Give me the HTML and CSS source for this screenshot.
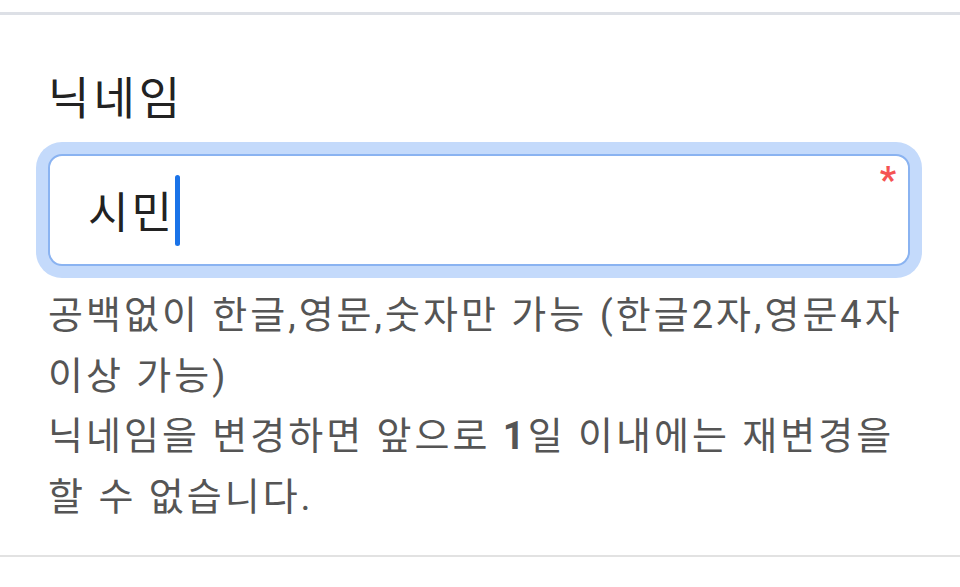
FILE: index.html
```html
<!DOCTYPE html>
<html lang="ko">
<head>
  <meta charset="UTF-8" />
  <meta name="viewport" content="width=device-width, initial-scale=1.0"/>
  <title>닉네임</title>
  <link rel="stylesheet" href="styles.css">
</head>
<body>
  <div class="topbar"></div>

  <section class="field">
    <label class="field-label" for="nick">닉네임</label>

    <div class="input-box" id="nick">
      <span class="input-value">시민</span><span class="caret"></span>
      <span class="required">*</span>
    </div>

    <p class="help">공백없이 한글,영문,숫자만 가능 (한글2자,영문4자 이상 가능)</p>
    <p class="help">닉네임을 변경하면 앞으로 <b>1</b>일 이내에는 재변경을 할 수 없습니다.</p>
  </section>
</body>
</html>
```

FILE: styles.css
```css
* {
  margin: 0;
  padding: 0;
  box-sizing: border-box;
}

body, html {
  height: 100%;
  background: #ffffff;
  font-family: Roboto, "Noto Sans CJK KR", sans-serif;
  overflow: hidden;
}

.topbar {
  height: 12px;
  border-bottom: 3px solid #dde0e6;
  box-sizing: content-box;
}

.field {
  padding: 55px 50px 28px 48px;
  border-bottom: 2px solid #e2e2e2;
}

.field-label {
  display: block;
  font-size: 45px;
  line-height: 60px;
  letter-spacing: 4px;
  color: #222222;
}

.input-box {
  position: relative;
  display: flex;
  align-items: center;
  height: 112px;
  margin-top: 24px;
  padding-left: 38px;
  border: 2px solid #8ab3f1;
  border-radius: 14px;
  box-shadow: 0 0 0 12px #c4dafb;
  background: #ffffff;
}

.input-value {
  font-size: 44px;
  letter-spacing: 3px;
  color: #222222;
}

.caret {
  width: 5px;
  height: 71px;
  border-radius: 3px;
  background: #1a73e8;
}

.required {
  position: absolute;
  top: 4px;
  right: 12px;
  font-size: 36px;
  font-weight: bold;
  line-height: 40px;
  color: #f55353;
}

.help {
  font-size: 38px;
  line-height: 60.5px;
  letter-spacing: 3px;
  color: #555555;
  word-break: keep-all;
}

.help:first-of-type {
  margin-top: 19px;
}

.help b {
  font-weight: bold;
}
```
